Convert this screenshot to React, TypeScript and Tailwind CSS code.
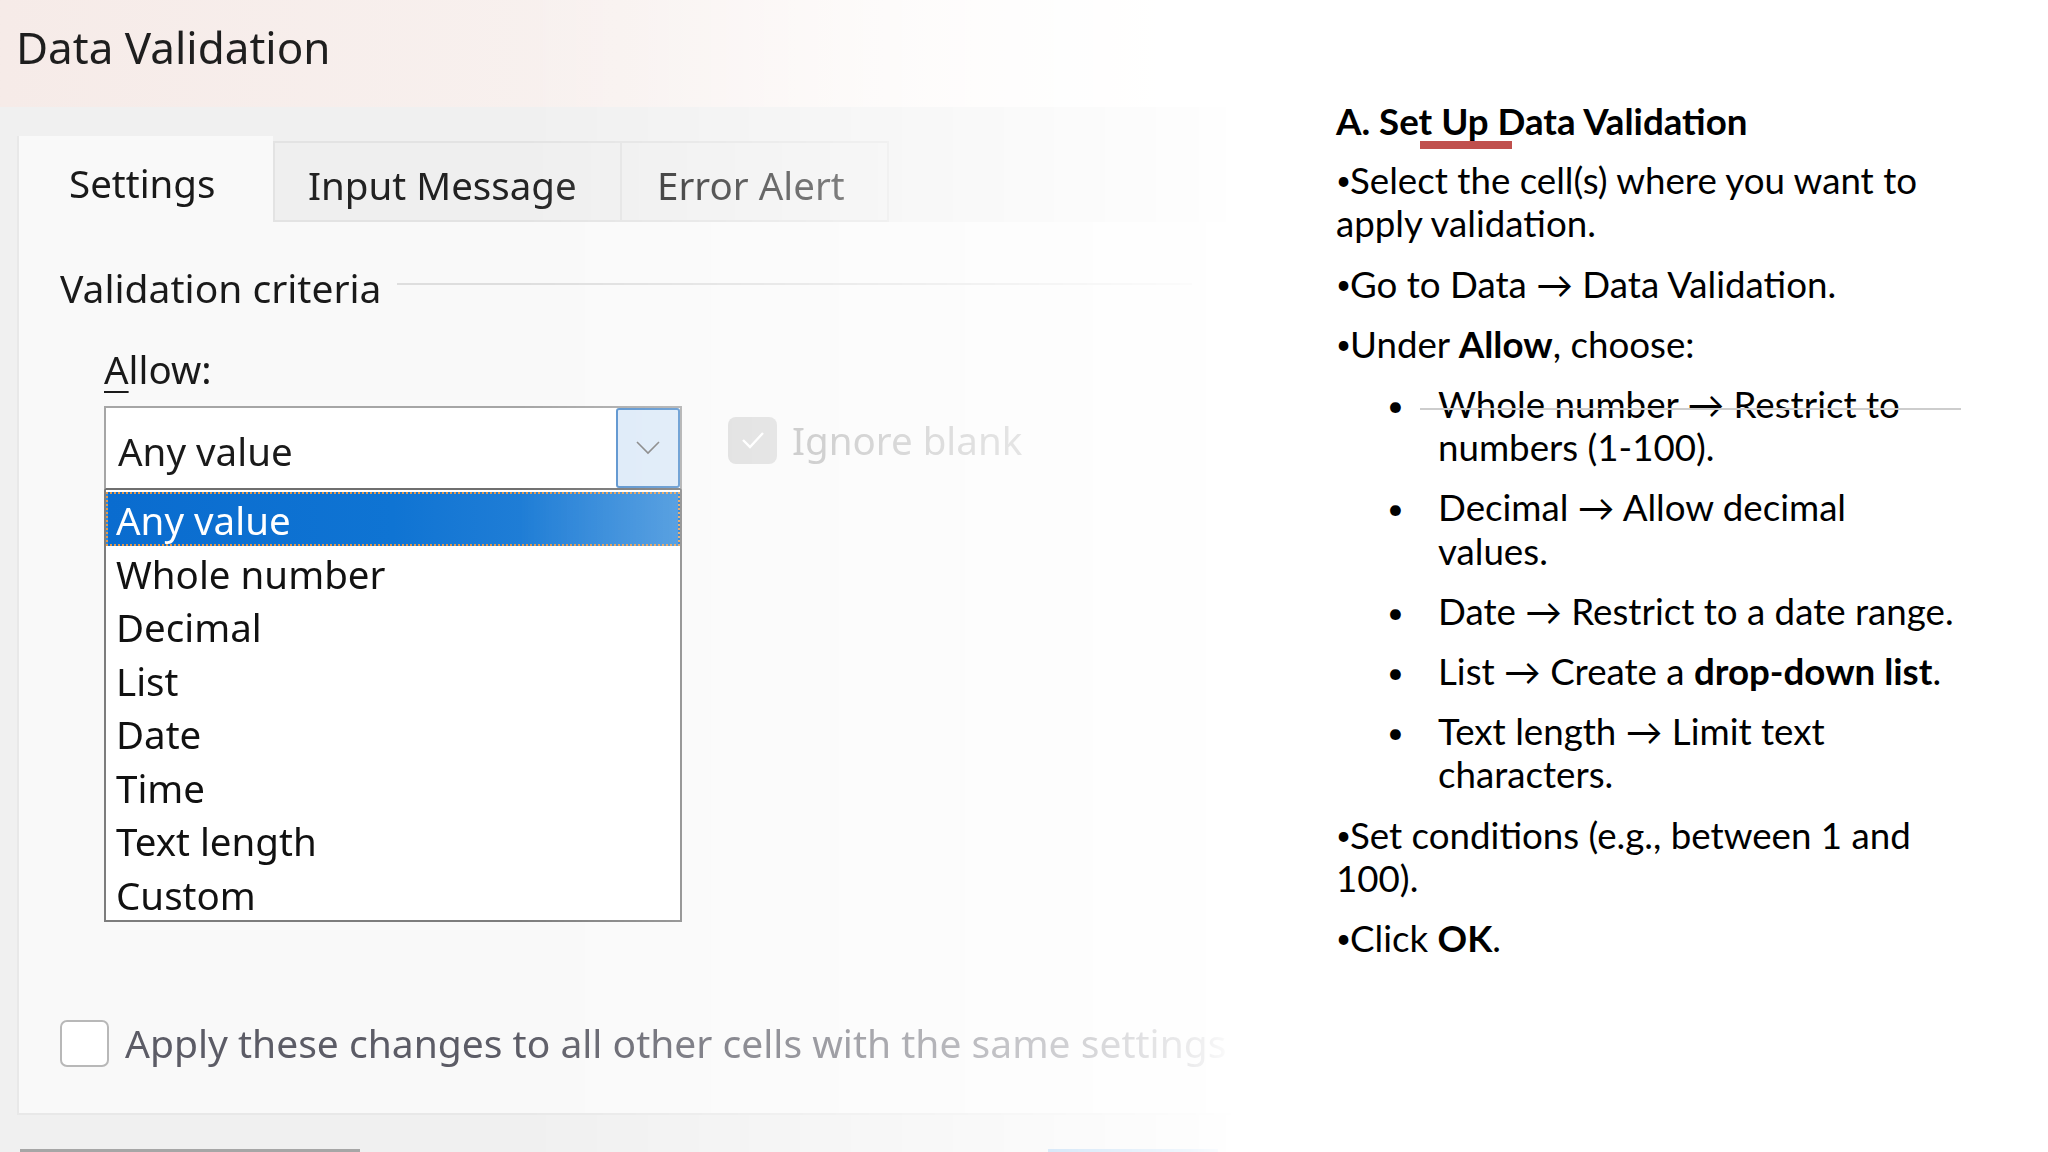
const items = ['Any value', 'Whole number', 'Decimal', 'List', 'Date', 'Time', 'Text length', 'Custom']

function Chevron() {
  return (
    <svg width="24" height="14" viewBox="0 0 24 14" fill="none">
      <polyline points="1,1 12,12 23,1" stroke="#7a7a7a" strokeWidth="1.6" />
    </svg>
  )
}

function DialogShot() {
  return (
    <div className="w-[1240px] h-full shrink-0 flex flex-col font-['Noto_Sans',sans-serif] [mask-image:linear-gradient(to_right,#000_0%,#000_42%,rgba(0,0,0,0.12)_96%,transparent_100%)]">
      {/* title bar */}
      <div className="h-[107px] shrink-0 bg-gradient-to-r from-[#f6ebe8] via-[#f8f1ef] to-white pl-[16px] pt-[17px]">
        <h1 className="text-[44px] leading-[60px] text-[#1e1e1e] font-normal">Data Validation</h1>
      </div>

      <div className="flex-1 bg-[#f0f0f0] flex flex-col pl-[17px]">
        {/* tabs */}
        <div className="h-[115px] shrink-0 flex items-end text-[38.5px] leading-[52px]">
          <div className="w-[256px] h-[86px] bg-[#f9f9f9] border-l-2 border-[#e8e8e8] pl-[50px] pt-[21px] text-[#1a1a1a]">
            Settings
          </div>
          <div className="w-[349px] h-[81px] bg-[#efefef] border-2 border-[#e3e3e3] pl-[33px] pt-[16px] text-[#222]">
            Input Message
          </div>
          <div className="w-[267px] h-[81px] bg-[#efefef] border-2 border-l-0 border-[#e3e3e3] pl-[35px] pt-[16px] text-[#1f1f1f]">
            Error Alert
          </div>
        </div>

        {/* panel */}
        <div className="h-[893px] shrink-0 bg-[#f9f9f9] border-l-2 border-b-2 border-[#e8e8e8] flex flex-col pl-[41px] pt-[40px] text-[38.5px] leading-[52px] text-[#1a1a1a]">
          <div className="flex items-center h-[52px] mr-[48px]">
            <span className="whitespace-nowrap text-[39px]">Validation criteria</span>
            <div className="ml-[16px] flex-1 h-[2px] bg-[#dedede] -mt-[8px]" />
          </div>

          <div className="mt-[29px] pl-[44px]">
            <div className="h-[52px]">
              <span className="underline decoration-2 underline-offset-[7px]">A</span>llow:
            </div>

            <div className="mt-[11px] flex items-start">
              <div className="w-[578px] shrink-0">
                <div className="h-[84px] bg-white border-2 border-[#a6a6a6] border-b-[#6f6f6f] flex items-center">
                  <span className="flex-1 pl-[12px] pt-[5px]">Any value</span>
                  <div className="w-[64px] h-full bg-[#dbe9f8] border-2 border-[#4f8ccb] rounded-[3px] flex items-center justify-center">
                    <Chevron />
                  </div>
                </div>
                <div className="h-[432px] bg-white border-2 border-t-0 border-[#7d7d7d] pt-[2px] flex flex-col">
                  {items.map((it, i) => (
                    <div
                      key={it}
                      className={
                        i === 0
                          ? 'h-[53.5px] shrink-0 pl-[8px] pt-[3px] leading-[46px] text-white bg-gradient-to-r from-[#0a6ccf] via-[#0f74d3] to-[#2e88d9] border-2 border-dotted border-[#e59a4a]'
                          : 'h-[53.5px] shrink-0 pl-[10px] pt-[4px] leading-[49px] text-[#111]'
                      }
                    >
                      {it}
                    </div>
                  ))}
                </div>
              </div>

              <div className="ml-[46px] mt-[8px] flex items-center gap-[15px]">
                <div className="w-[49px] h-[47px] rounded-[8px] bg-[#d9d9d9] flex items-center justify-center">
                  <svg width="26" height="20" viewBox="0 0 26 20" fill="none">
                    <polyline points="3,10 10,17 23,3" stroke="#ffffff" strokeWidth="2.4" />
                  </svg>
                </div>
                <span className="text-[38.5px] text-[#b3b3b3] whitespace-nowrap">Ignore blank</span>
              </div>
            </div>
          </div>

          <div className="mt-auto mb-[44px] flex items-center h-[52px] gap-[16px]">
            <div className="w-[49px] h-[47px] shrink-0 rounded-[7px] border-2 border-[#b8b8b8] bg-white" />
            <span className="whitespace-nowrap text-[39px] text-[#5c5c66]">
              Apply these changes to all other cells with the same settings
            </span>
          </div>
        </div>

        {/* button edges */}
        <div className="flex-1 flex items-end">
          <div className="ml-[3px] w-[340px] h-[3px] bg-[#a6a6a6]" />
          <div className="ml-auto mr-[22px] w-[170px] h-[3px] bg-[#7fb6ea]" />
        </div>
      </div>
    </div>
  )
}

function Dot() {
  return <span className="inline-block w-[14px] text-[26px] align-[4px]">•</span>
}

function Sub({ children, line }: { children: React.ReactNode; line?: boolean }) {
  return (
    <div className="flex items-start relative pl-[51px]">
      <span className="w-[51px] shrink-0 text-[29px] leading-[43.2px]">•</span>
      <p className="whitespace-nowrap">{children}</p>
      {line && <div className="absolute left-[84px] top-[25px] w-[541px] h-[2px] bg-[#cdcdcd]" />}
    </div>
  )
}

function Notes() {
  return (
    <div className="flex-1 pl-[96px] pt-[100px] font-['Lato',sans-serif] text-[36.7px] leading-[43.2px] text-black flex flex-col gap-[17px]">
      <p className="font-bold whitespace-nowrap">
        A. Set{' '}
        <span className="relative">
          Up
          <span className="absolute left-[-21px] top-[42px] w-[92px] h-[8px] bg-[#c0504d]" />
        </span>{' '}
        Data Validation
      </p>
      <p className="whitespace-nowrap -mt-[1px]">
        <Dot />
        Select the cell(s) where you want to
        <br />
        apply validation.
      </p>
      <p className="whitespace-nowrap">
        <Dot />
        Go to Data → Data Validation.
      </p>
      <p className="whitespace-nowrap">
        <Dot />
        Under <b>Allow</b>, choose:
      </p>
      <Sub line>
        Whole number → Restrict to
        <br />
        numbers (1-100).
      </Sub>
      <Sub>
        Decimal → Allow decimal
        <br />
        values.
      </Sub>
      <Sub>Date → Restrict to a date range.</Sub>
      <Sub>
        List → Create a <b>drop-down list</b>.
      </Sub>
      <Sub>
        Text length → Limit text
        <br />
        characters.
      </Sub>
      <p className="whitespace-nowrap">
        <Dot />
        Set conditions (e.g., between 1 and
        <br />
        100).
      </p>
      <p className="whitespace-nowrap">
        <Dot />
        Click <b>OK</b>.
      </p>
    </div>
  )
}

export default function App() {
  return (
    <div className="w-[2048px] h-[1152px] bg-white flex overflow-hidden">
      <DialogShot />
      <Notes />
    </div>
  )
}
